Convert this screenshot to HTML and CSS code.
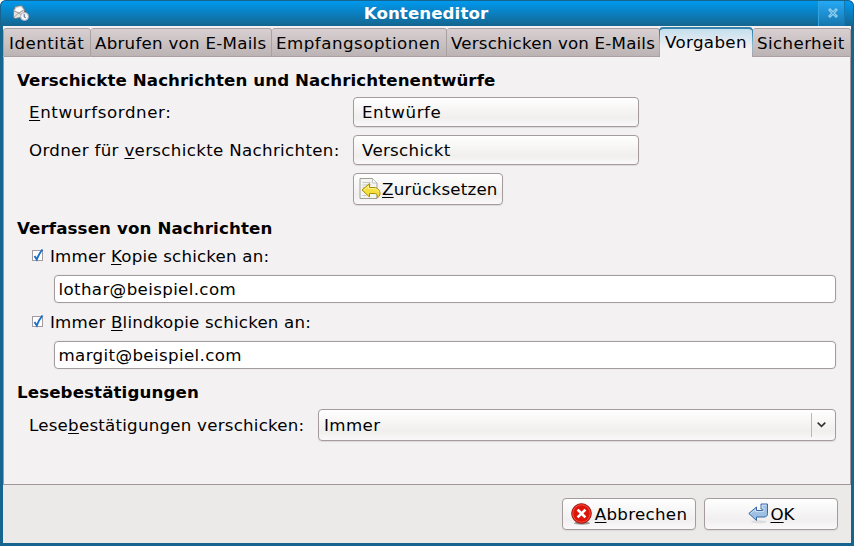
FILE: index.html
```html
<!DOCTYPE html>
<html lang="de">
<head>
<meta charset="utf-8">
<title>Konteneditor</title>
<link rel="stylesheet" href="styles.css">
</head>
<body>
<div class="window">
  <header class="titlebar">
    <svg class="app-icon" width="17" height="17" viewBox="0 0 17 17">
      <path d="M.5 5.500L2.500 1.500l6-1 3 4v7L2.500 13.500l-2-1z" fill="#e5e3df" stroke="#77716b" stroke-width=".8"/>
      <path d="M3 2.500l5-1 2.500 3-4 3-5-1z" fill="#fff" stroke="#aaa" stroke-width=".5"/>
      <path d="M1 6l5 2 5-3M1.500 12l4-4 5 3" fill="none" stroke="#999189" stroke-width=".8"/>
      <circle cx="11.500" cy="11.500" r="4" fill="#f6f6f6" stroke="#aaa9c2"/>
      <path d="M11.200 9v3l1.500.5" fill="none" stroke="#47648c"/>
    </svg>
    <h1 class="title">Konteneditor</h1>
    <div class="close"><svg width="10" height="10" viewBox="0 0 10 10"><path d="M2 2l6 6M8 2L2 8" stroke="#8dccee" stroke-width="3" stroke-linecap="square"/><path d="M2.500 2.500l5 5M7.500 2.500l-5 5" stroke="#4aa6d8" stroke-width="1"/></svg></div>
  </header>
  <nav class="tabs">
    <div class="tab t1"><span>Identität</span></div>
    <div class="tab t2"><span>Abrufen von E-Mails</span></div>
    <div class="tab t3"><span>Empfangsoptionen</span></div>
    <div class="tab t4"><span>Verschicken von E-Mails</span></div>
    <div class="tab t5 active"><span>Vorgaben</span></div>
    <div class="tab t6"><span>Sicherheit</span></div>
  </nav>
  <main class="panel">
    <h2 class="h-drafts">Verschickte Nachrichten und Nachrichtenentwürfe</h2>
    <div class="folders">
      <div class="label l-drafts"><u>E</u>ntwurfsordner:</div>
      <div class="button folder drafts"><span>Entwürfe</span></div>
      <div class="label l-sent">Ordner für <u>v</u>erschickte Nachrichten:</div>
      <div class="button folder"><span>Verschickt</span></div>
      <div class="button reset">
        <svg width="22" height="22" viewBox="0 0 22 22">
          <path d="M1 .5h12.500l4.500 4.500v15.500H1z" fill="#f4f4f1" stroke="#a0a09b"/>
          <path d="M13.500 .5v4.500H18z" fill="#fff" stroke="#b5b5b0" stroke-width=".8"/>
          <path d="M3.500 4.500h8M3.500 7h9M3.500 9.500h3M3.500 17.500h4" stroke="#c8c8c5"/>
          <path d="M3 12l7.500-6.500v4h4.500c4 .3 6 3 6 6 0 2-1 3.500-3 4 1-3-.5-4-3-4h-4.500V19z" fill="#f4df3e" stroke="#a89000"/>
          <path d="M5 12l4.500-3.800v2.500H15c2.500.2 4 1.500 4.500 3.300" fill="none" stroke="#fff391"/>
        </svg>
        <span><u>Z</u>urücksetzen</span>
      </div>
    </div>
    <h2 class="h-compose">Verfassen von Nachrichten</h2>
    <div class="check c1"><i class="box"><svg width="13" height="13" viewBox="0 0 13 13"><path d="M3.500 7L5.800 10.500Q7.500 5.500 11.500 .5" fill="none" stroke="#1b6fcd" stroke-width="1.900"/></svg></i><span>Immer <u>K</u>opie schicken an:</span></div>
    <div class="field f1"><span>lothar@beispiel.com</span></div>
    <div class="check c2"><i class="box"><svg width="13" height="13" viewBox="0 0 13 13"><path d="M3.500 7L5.800 10.500Q7.500 5.500 11.500 .5" fill="none" stroke="#1b6fcd" stroke-width="1.900"/></svg></i><span>Immer <u>B</u>lindkopie schicken an:</span></div>
    <div class="field f2"><span>margit@beispiel.com</span></div>
    <h2 class="h-receipt">Lesebestätigungen</h2>
    <div class="receipt">
      <div class="label l-receipt">Lese<u>b</u>estätigungen verschicken:</div>
      <div class="button combo"><span>Immer</span><div class="arrow"><svg width="9" height="6" viewBox="0 0 9 6"><path d="M.7 .7L4.500 4.300 8.300 .7" fill="none" stroke="#333" stroke-width="1.700"/></svg></div></div>
    </div>
  </main>
  <footer class="actions">
    <div class="button cancel">
      <svg width="22" height="22" viewBox="0 0 22 22">
        <ellipse cx="11" cy="20.200" rx="8" ry="1.600" fill="#999"/>
        <circle cx="10.500" cy="10.500" r="9.800" fill="#de1408" stroke="#9b0f08"/>
        <circle cx="10.500" cy="10.500" r="8.700" fill="none" stroke="#f4523f"/>
        <path d="M7.500 7.500l6 6M13.500 7.500l-6 6" stroke="#fff" stroke-width="2.600" stroke-linecap="square"/>
      </svg>
      <span><u>A</u>bbrechen</span>
    </div>
    <div class="button ok">
      <svg width="22" height="22" viewBox="0 0 22 22">
        <ellipse cx="12" cy="18.800" rx="8" ry="1.500" fill="#ddd"/>
        <path d="M1.800 10.500L9.500 4v3.500h5.500c1 0 1-.5 1-1.500H14V1h6.500v9.500c0 2.500-1.500 3.500-3.500 3.500H9.500v3.500z" fill="#9dbfe3" stroke="#3768a3" stroke-linejoin="round"/>
        <path d="M3.500 10.500l5-4v2.200h7c1.500 0 1.700-1 1.700-3.500h-2.200V2.200h4.500" fill="none" stroke="#d6e6f5" stroke-width=".9"/>
      </svg>
      <span><u>O</u>K</span>
    </div>
  </footer>
</div>
</body>
</html>
```
FILE: styles.css
```css
* { box-sizing: border-box; }
body {
  margin: 0;
  background: #fff;
  font-family: "DejaVu Sans", sans-serif;
  font-size: 16.67px;
  line-height: 20px;
  letter-spacing: .3px;
  color: #000;
  white-space: nowrap;
}
u { text-decoration-thickness: 1px; text-underline-offset: 2px; text-decoration-skip-ink: none; }
svg { display: block; flex: none; }
h1, h2 { margin: 0; font-size: 16.67px; line-height: 20px; font-weight: bold; letter-spacing: .08px; }
h2 { height: 20px; line-height: 22px; }
.window {
  width: 854px;
  height: 546px;
  padding: 0 3px 3px;
  display: flex;
  flex-direction: column;
  background: #15658f;
  border-radius: 6px 6px 0 0;
  overflow: hidden;
}
.titlebar {
  height: 26px;
  flex: none;
  margin: 0 -3px;
  padding: 0 8px 0 12px;
  display: flex;
  align-items: center;
  color: #fff;
  border-top: 1px solid #15658f;
  border-left: 1px solid #15658f;
  border-right: 1px solid #15658f;
  border-radius: 6px 6px 0 0;
  background: linear-gradient(#0099ee, #15658f);
}
.title { flex: 1; text-align: center; padding-left: 4px; }
.close {
  width: 27px;
  height: 25px;
  display: flex;
  align-items: center;
  justify-content: center;
  border-left: 1px solid #31a5e2;
  border-right: 1px solid #1576b0;
  background: linear-gradient(#24a9f7, #1776ab);
}
.close svg { margin: 0 0 2px 2px; }
.tabs {
  height: 31px;
  flex: none;
  display: flex;
  align-items: flex-end;
  background: #f4f1f3;
}
.tab {
  flex: none;
  height: 29px;
  padding: 5px 0 0 5px;
  border: 1px solid #aaa0a2;
  border-left-width: 0;
  border-radius: 3px 3px 0 0;
  background: linear-gradient(#d7cfd1, #bcb4b4);
}
.t1 { width: 88px; border-left-width: 1px; letter-spacing: .5px; }
.t2 { width: 181px; padding-left: 4px; letter-spacing: .27px; }
.t3 { width: 175px; padding-left: 4px; letter-spacing: .5px; }
.t4 { width: 213px; padding-left: 4px; letter-spacing: .2px; }
.t5 { width: 94px; letter-spacing: .36px; }
.t6 { flex: 1; padding-left: 4px; letter-spacing: .4px; }
.active {
  height: 30px;
  margin-left: -1px;
  padding-top: 4px;
  border: 1px solid transparent;
  border-top: 2px solid #3585ab;
  border-bottom: 0;
  border-radius: 4px 4px 0 0;
  background:
    linear-gradient(#c5dfee, #f4f1f3 70%) padding-box,
    linear-gradient(#15739e, #8ebdd0 60%, #aaa0a2) border-box;
}
.panel {
  height: 428px;
  flex: none;
  padding: 13px 14px 0 13px;
  border: 1px solid #a29798;
  border-top: 0;
  background: #f4f1f3;
}
.folders {
  margin-top: 7px;
  padding-left: 12px;
  display: grid;
  grid-template-columns: 324px 286px;
  grid-template-rows: 30px 30px 32px;
  row-gap: 8px;
  align-items: center;
}
.label, .button > span, .check > span { padding-top: 2px; }
.button {
  display: flex;
  align-items: center;
  border: 1px solid #a39b9d;
  border-radius: 4px;
  background: linear-gradient(#fff, #f0efed 70%, #faf8f9);
  box-shadow: 0 1px 1px #ddd9db;
}
.l-drafts { letter-spacing: .6px; }
.l-sent { letter-spacing: .33px; }
.folder { height: 30px; padding-left: 8px; }
.drafts { letter-spacing: .58px; }
.reset { grid-column: 2; width: 150px; height: 32px; padding-left: 5px; gap: 1px; letter-spacing: .2px; }
.h-compose { margin-top: 13px; letter-spacing: .12px; }
.check { height: 20px; display: flex; align-items: center; padding-left: 15px; gap: 7px; letter-spacing: .2px; }
.box { width: 11px; height: 11px; margin-bottom: 2px; border: 1px solid #a39b9d; background: #fff; }
.box svg { margin: -2px; }
.c1 { margin-top: 8px; }
.c2 { margin-top: 9px; }
.field {
  height: 28px;
  margin: 9px 0 0 37px;
  padding: 4px 3.5px 0;
  border: 1px solid #a39b9d;
  border-radius: 4px;
  background: #fff;
  box-shadow: 0 0 0 1px #eeebec;
  letter-spacing: .36px;
}
.h-receipt { margin-top: 13px; letter-spacing: .12px; }
.receipt { margin-top: 7px; padding-left: 12px; display: flex; align-items: center; }
.l-receipt { width: 289px; letter-spacing: .23px; }
.combo { flex: 1; height: 32px; padding-left: 5px; justify-content: space-between; letter-spacing: .4px; }
.arrow { width: 24px; height: 24px; padding-left: 5px; display: flex; align-items: center; border-left: 1px solid #bbb5b7; }
.actions {
  flex: 1;
  padding: 13px 13px 0;
  display: flex;
  justify-content: flex-end;
  gap: 8px;
  background: #ebeae8;
}
.actions .button { width: 134px; height: 32px; justify-content: center; gap: 2px; background: linear-gradient(#fff, #f1eff0 70%, #faf8f9); }
.actions .ok { gap: 1px; letter-spacing: 0; }
```
